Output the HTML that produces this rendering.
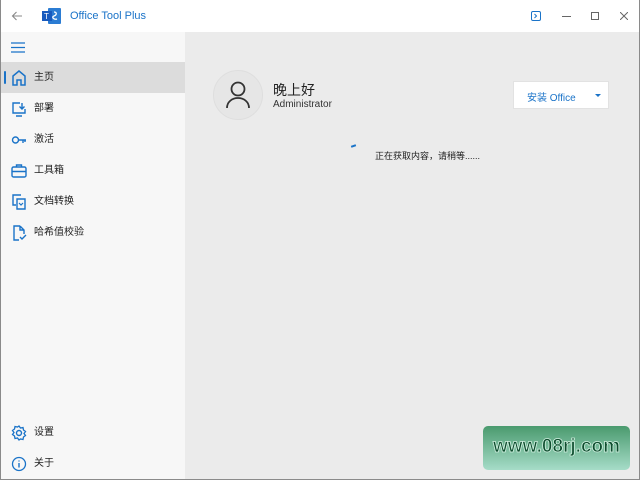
<!DOCTYPE html>
<html><head><meta charset="utf-8"><style>
*{margin:0;padding:0;box-sizing:border-box}
body{width:640px;height:480px;overflow:hidden;background:#ebebeb;font-family:"Liberation Sans","Noto Sans CJK SC",sans-serif;position:relative}
.win{position:absolute;inset:0;border:1px solid #8a8a8a;border-top:none}
.title{position:absolute;left:0;top:0;width:640px;height:32px;background:#fff}
.side{position:absolute;left:1px;top:32px;width:184px;height:447px;background:#f7f7f7}
.item{position:absolute;left:0;width:184px;height:31px;font-size:10px;color:#222;line-height:31px;padding-left:33px}
.item svg{position:absolute;left:10px;top:8px}
.sel{background:#dcdcdc}
.bar{position:absolute;left:3px;top:9px;width:2px;height:13px;background:#1a73c8;border-radius:1px}
</style></head><body>
<div class="title">
<svg style="position:absolute;left:11px;top:10px" width="12" height="12" viewBox="0 0 12 12"><path d="M11 6H1.5M5.5 2L1.5 6l4 4" stroke="#888" stroke-width="1.1" fill="none"/></svg>
<svg style="position:absolute;left:42px;top:8px" width="19" height="16" viewBox="0 0 19 16"><rect x="6" y="0" width="13" height="16" rx="1" fill="#2b7cd3"/><rect x="0" y="3" width="10" height="10" fill="#185abd"/><text x="2" y="11" font-size="8" fill="#fff" font-family="Liberation Sans">T</text><path d="M12 4c3 0 3 3 0 4s0 4 3 3" stroke="#fff" stroke-width="1.3" fill="none"/></svg>
<div style="position:absolute;left:70px;top:10px;font-size:11px;color:#1a73c8">Office Tool Plus</div>
<svg style="position:absolute;left:531px;top:11px" width="10" height="10" viewBox="0 0 10 10"><rect x="0.5" y="0.5" width="9" height="9" rx="1.5" fill="none" stroke="#1a73c8"/><path d="M3.5 3l2 2-2 2" stroke="#1a73c8" fill="none"/></svg>
<div style="position:absolute;left:562px;top:16px;width:9px;height:1px;background:#666"></div>
<div style="position:absolute;left:591px;top:12px;width:8px;height:8px;border:1px solid #666"></div>
<svg style="position:absolute;left:620px;top:12px" width="8" height="8" viewBox="0 0 8 8"><path d="M0 0L8 8M8 0L0 8" stroke="#666"/></svg>
</div>
<div class="side">
<svg style="position:absolute;left:10px;top:10px" width="14" height="11" viewBox="0 0 14 11"><path d="M0 1h14M0 5.5h14M0 10h14" stroke="#1a73c8" stroke-width="1.3"/></svg>
<div class="item sel" style="top:30px"><div class="bar"></div><svg width="16" height="16" viewBox="0 0 16 16"><path d="M2 15V6l6-5 6 5v9h-4v-5H6v5z" stroke="#1a73c8" stroke-width="1.5" fill="none"/></svg>主页</div>
<div class="item" style="top:61px"><svg width="16" height="16" viewBox="0 0 16 16"><path d="M9 2H2v10h12V8M5 15h6M11 2v6M8.5 5.5L11 8l2.5-2.5" stroke="#1a73c8" stroke-width="1.4" fill="none"/></svg>部署</div>
<div class="item" style="top:92px"><svg width="16" height="16" viewBox="0 0 16 16"><circle cx="4.5" cy="8" r="3" stroke="#1a73c8" stroke-width="1.4" fill="none"/><path d="M7.5 8H15M12 8v3M14 8v2" stroke="#1a73c8" stroke-width="1.4"/></svg>激活</div>
<div class="item" style="top:123px"><svg width="16" height="16" viewBox="0 0 16 16"><rect x="1" y="4" width="14" height="10" rx="1.5" stroke="#1a73c8" stroke-width="1.4" fill="none"/><path d="M5.5 4V2h5v2M1 8.5h14" stroke="#1a73c8" stroke-width="1.4" fill="none"/></svg>工具箱</div>
<div class="item" style="top:154px"><svg width="16" height="16" viewBox="0 0 16 16"><path d="M10 1H2v10h3M6 5h8v10H6z" stroke="#1a73c8" stroke-width="1.4" fill="none"/><path d="M8 9l2 2 2-2" stroke="#1a73c8" stroke-width="1.2" fill="none"/></svg>文档转换</div>
<div class="item" style="top:185px"><svg width="16" height="16" viewBox="0 0 16 16"><path d="M9 1H3v14h5M9 1l4 4v4M9 1v4h4M9 12l2 2 4-4" stroke="#1a73c8" stroke-width="1.4" fill="none"/></svg>哈希值校验</div>
<div class="item" style="top:385px"><svg width="16" height="16" viewBox="0 0 16 16"><circle cx="8" cy="8" r="2.5" stroke="#1a73c8" stroke-width="1.4" fill="none"/><path d="M8 1l1.5 2 2.5-.5.5 2.5 2 1.5-1.5 2 1.5 2-2 1.5-.5 2.5-2.5-.5L8 15l-1.5-2-2.5.5-.5-2.5-2-1.5 1.5-2-1.5-2 2-1.5.5-2.5 2.5.5z" stroke="#1a73c8" stroke-width="1.3" fill="none"/></svg>设置</div>
<div class="item" style="top:416px"><svg width="16" height="16" viewBox="0 0 16 16"><circle cx="8" cy="8" r="6.5" stroke="#1a73c8" stroke-width="1.3" fill="none"/><path d="M8 7v4.5M8 4.5v1" stroke="#1a73c8" stroke-width="1.4"/></svg>关于</div>
</div>
<div style="position:absolute;left:213px;top:70px;width:50px;height:50px;border-radius:50%;background:#e6e6e6;border:1px solid #dedede"></div>
<svg style="position:absolute;left:225px;top:81px" width="26" height="28" viewBox="0 0 26 28"><circle cx="13" cy="8" r="6.5" stroke="#333" stroke-width="1.8" fill="none"/><path d="M2 27c0-6 5-10 11-10s11 4 11 10" stroke="#333" stroke-width="1.8" fill="none"/></svg>
<div style="position:absolute;left:273px;top:80px;font-size:14px;color:#222">晚上好</div>
<div style="position:absolute;left:273px;top:99px;font-size:10px;color:#333">Administrator</div>
<div style="position:absolute;left:513px;top:81px;width:96px;height:28px;background:#fff;border:1px solid #e2e2e2"></div>
<div style="position:absolute;left:527px;top:89px;font-size:10px;color:#1a73c8">安装 Office</div>
<div style="position:absolute;left:595px;top:94px;border-left:3px solid transparent;border-right:3px solid transparent;border-top:3px solid #1a73c8"></div>
<div style="position:absolute;left:351px;top:145px;width:5px;height:2px;background:#1a73c8;transform:rotate(-20deg)"></div>
<div style="position:absolute;left:375px;top:149px;font-size:9px;color:#222">正在获取内容，请稍等......</div>
<div style="position:absolute;left:483px;top:426px;width:147px;height:44px;border-radius:5px;background:linear-gradient(#4a9a6e,#a6dcc8)"></div>
<div style="position:absolute;left:483px;top:436px;width:147px;text-align:center;font-size:19px;font-weight:bold;color:#0e4d2e;-webkit-text-stroke:0.8px #d0f0e0;font-family:'Liberation Sans',sans-serif">www.08rj.com</div>
<div class="win"></div>
</body></html>
